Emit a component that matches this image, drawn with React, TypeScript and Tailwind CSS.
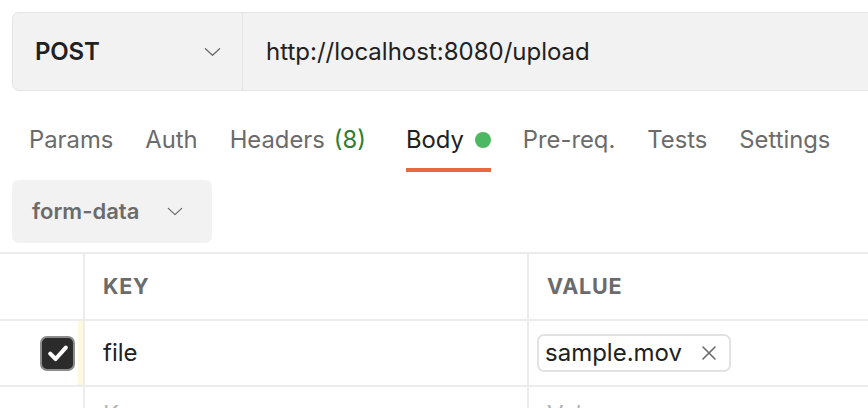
import React from 'react';

// postman 스타일 request 편집기 일부
const tabs = [
  { name: 'Params' },
  { name: 'Auth' },
  { name: 'Headers', count: 8 },
  { name: 'Body', active: true, dot: true },
  { name: 'Pre-req.' },
  { name: 'Tests' },
  { name: 'Settings' },
];

function Chevron({ cls }: { cls?: string }) {
  return (
    <svg viewBox="0 0 18 10" className={cls} fill="none" stroke="currentColor" strokeWidth="1.4" strokeLinecap="round" strokeLinejoin="round">
      <path d="M1.5 1.5 L9 8.5 L16.5 1.5" />
    </svg>
  );
}

export default function App() {
  return (
    <div className="w-[868px] h-[408px] overflow-hidden bg-white text-[#212121] font-['Inter','Liberation_Sans',sans-serif]">
      {/* url bar */}
      <div className="pt-[12px] pl-[12px]">
        <div className="flex h-[79px] w-[880px] bg-[#f2f2f2] border border-[#e4e4e4] rounded-l-[7px]">
          <div className="flex items-center justify-between w-[230px] pl-[22px] pr-[21px] border-r border-[#e4e4e4]">
            <span className="text-[24px] font-semibold tracking-[-0.2px]">POST</span>
            <Chevron cls="w-[17px] h-[10px] text-[#6b6b6b]" />
          </div>
          <div className="flex items-center pl-[23px] text-[24px]">http://localhost:8080/upload</div>
        </div>
      </div>

      {/* tabs */}
      <div className="flex gap-[32px] pl-[29px] h-[81px]">
        {tabs.map((t) => (
          <div key={t.name} className={`relative flex items-center pt-[16px] text-[23.8px] ${t.count ? 'mr-[8px]' : ''}`}>
            <span className={t.active ? 'text-[#212121]' : 'text-[#6b6b6b]'}>{t.name}</span>
            {t.count && <span className="ml-[9px] text-[#2e7d32]">({t.count})</span>}
            {t.dot && <span className="ml-[11px] w-[16px] h-[16px] rounded-full bg-[#4cb862]"></span>}
            {t.active && <div className="absolute left-0 right-0 bottom-0 h-[4px] bg-[#e8693f]"></div>}
          </div>
        ))}
      </div>

      {/* body type */}
      <div className="pl-[12px] pt-[8px]">
        <div className="flex items-center w-[200px] h-[63px] bg-[#f2f2f2] rounded-[7px] pl-[20px]">
          <span className="text-[22px] font-semibold text-[#6b6b6b]">form-data</span>
          <Chevron cls="ml-[28px] w-[16px] h-[9px] text-[#6b6b6b]" />
        </div>
      </div>

      {/* key / value table */}
      <div className="mt-[9px] border-t-2 border-[#ececec]">
        <div className="grid grid-cols-[85px_444px_1fr] h-[65px]">
          <div className="border-r-2 border-[#ececec]"></div>
          <div className="flex items-center pl-[18px] text-[21.5px] font-bold tracking-[0.8px] text-[#6b6b6b] border-r-2 border-[#ececec]">KEY</div>
          <div className="flex items-center pl-[18px] text-[21.5px] font-bold tracking-[0.8px] text-[#6b6b6b]">VALUE</div>
        </div>
        <div className="grid grid-cols-[85px_444px_1fr] h-[66px] border-t-2 border-[#ececec]">
          <div className="flex items-center justify-end border-r-2 border-[#ececec]">
            <div className="w-[35px] h-[35px] rounded-[7px] bg-[#2b2b2b] border-2 border-[#8c8c8c] flex items-center justify-center">
              <svg viewBox="0 0 20 20" className="w-[24px] h-[24px]" fill="none" stroke="#fff" strokeWidth="3.4" strokeLinecap="round" strokeLinejoin="round">
                <path d="M3.5 10.5 L8 15 L16.5 5.5" />
              </svg>
            </div>
            <div className="ml-[3px] w-[5px] self-stretch bg-[#fff8e1]"></div>
          </div>
          <div className="flex items-center pl-[18px] text-[24px] border-r-2 border-[#ececec]">file</div>
          <div className="flex items-center pl-[8px]">
            <div className="flex items-center h-[38px] pl-[6px] pr-[12px] border-2 border-[#e2e2e2] rounded-[7px] text-[24px]">
              sample.mov
              <svg viewBox="0 0 16 16" className="ml-[19px] w-[16px] h-[16px]" fill="none" stroke="#6b6b6b" strokeWidth="1.6" strokeLinecap="round">
                <path d="M2 2 L14 14 M14 2 L2 14" />
              </svg>
            </div>
          </div>
        </div>
        <div className="grid grid-cols-[85px_444px_1fr] h-[66px] border-t-2 border-[#ececec]">
          <div className="border-r-2 border-[#ececec]"></div>
          <div className="pl-[18px] pt-[10px] text-[24px] text-[#b3b3b3] border-r-2 border-[#ececec]">Key</div>
          <div className="pl-[18px] pt-[10px] text-[24px] text-[#b3b3b3]">Value</div>
        </div>
      </div>
    </div>
  );
}
